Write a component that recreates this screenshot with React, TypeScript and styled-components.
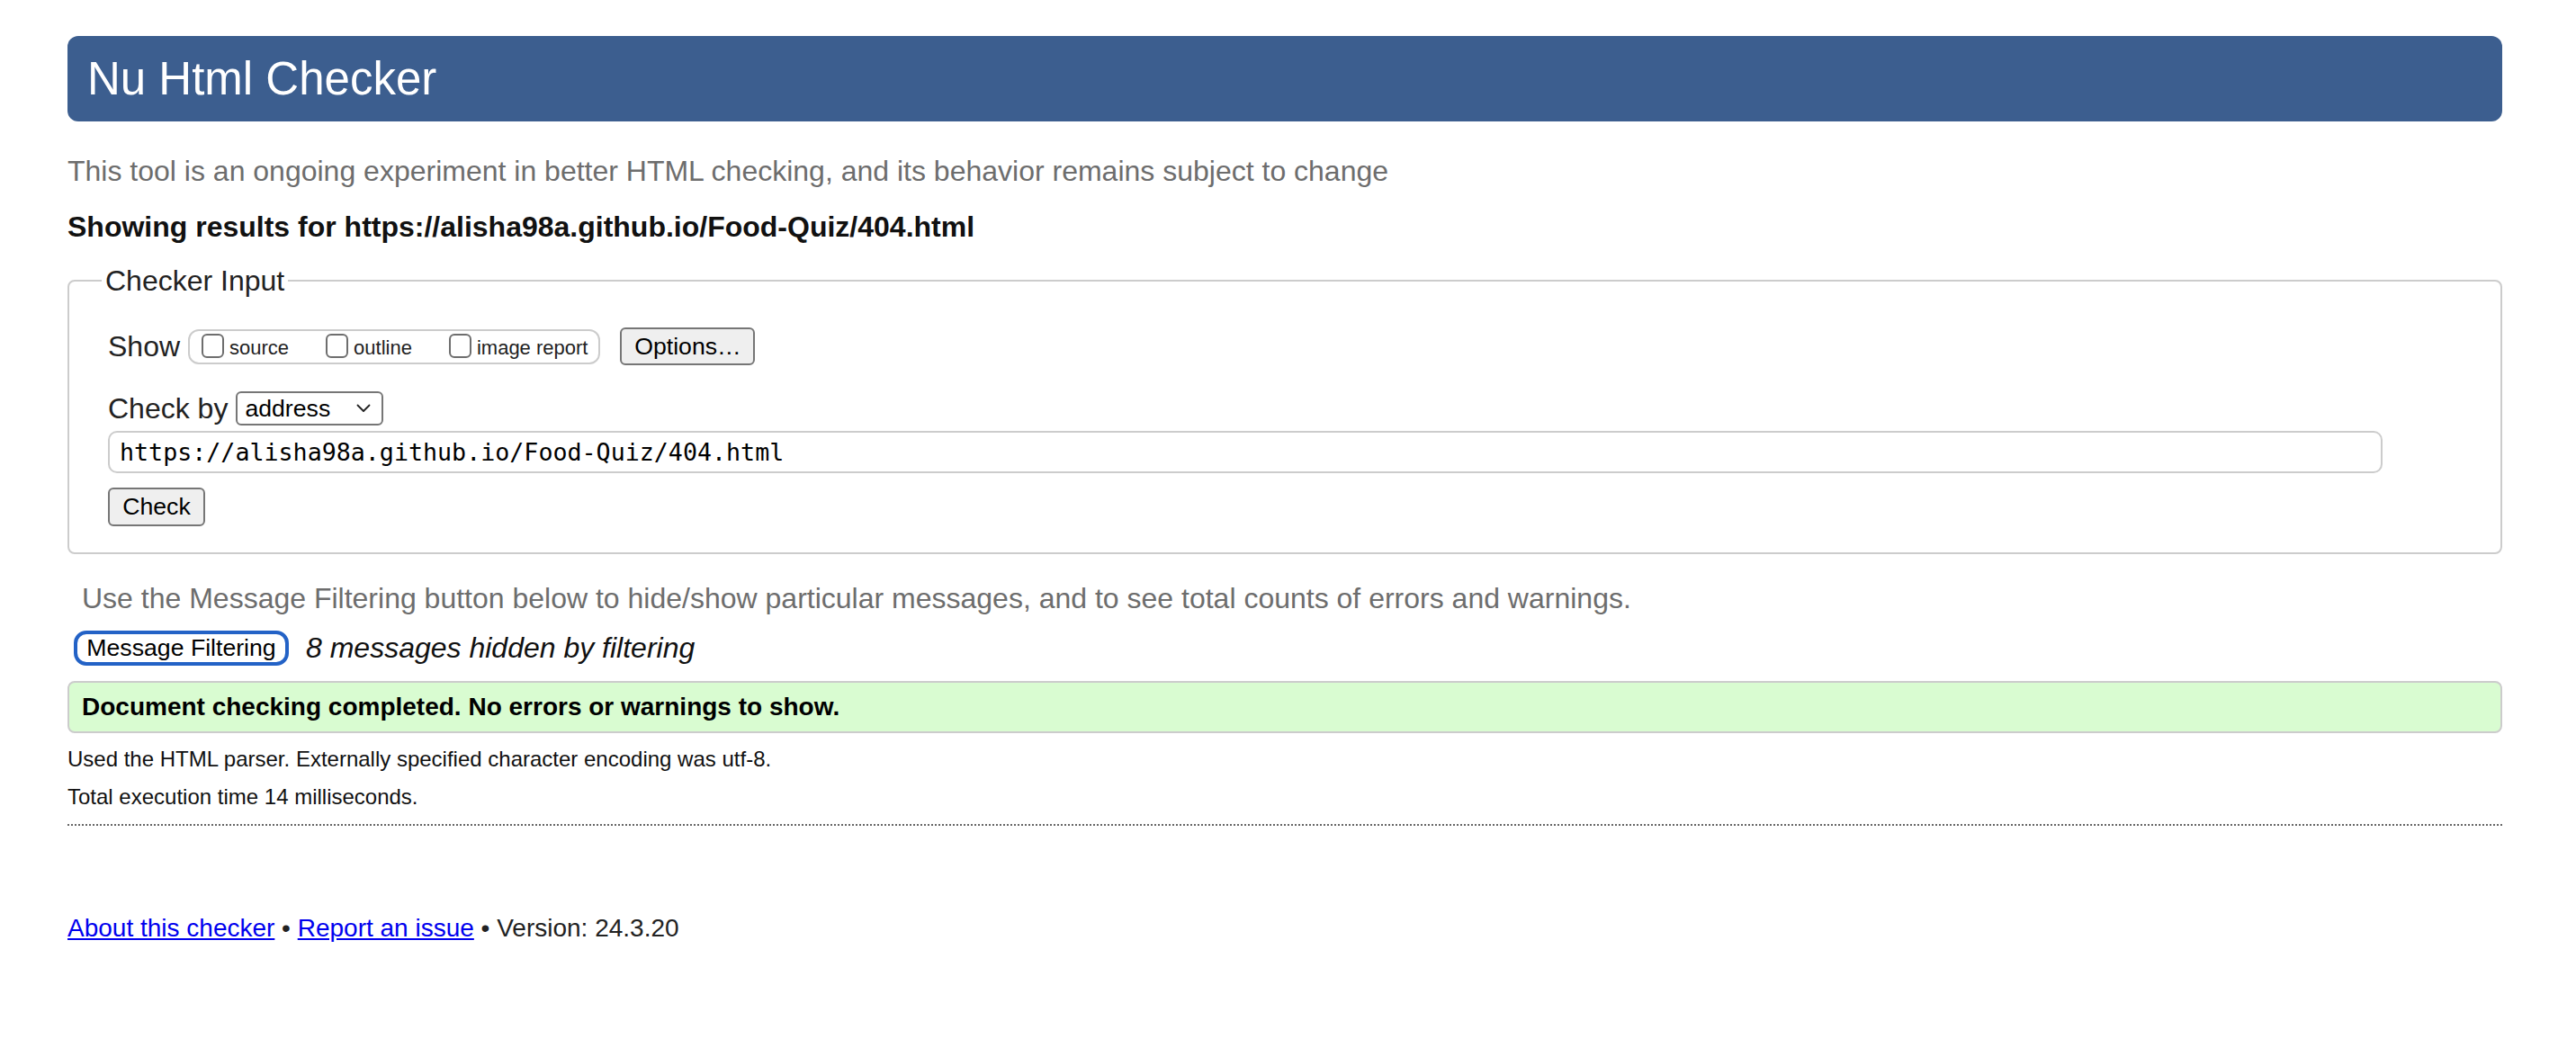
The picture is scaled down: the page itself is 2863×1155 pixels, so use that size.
import React from "react";
import styled, { createGlobalStyle } from "styled-components";

const GlobalStyle = createGlobalStyle`
  html, body {
    margin: 0;
    padding: 0;
    background: #fff;
  }
  body {
    font-family: "Liberation Sans", Arial, Helvetica, sans-serif;
    color: #222;
  }
`;

const App = () => {
  return (
    <>
      <GlobalStyle />
      <Page>
        <Header>Nu Html Checker</Header>
        <Intro>
          This tool is an ongoing experiment in better HTML checking, and its
          behavior remains subject to change
        </Intro>
        <Results>
          Showing results for https://alisha98a.github.io/Food-Quiz/404.html
        </Results>

        <Fieldset>
          <Legend>Checker Input</Legend>
          <Row>
            <RowLabel>Show</RowLabel>
            <CheckGroup>
              <Option>
                <Box type="checkbox" />
                source
              </Option>
              <Option>
                <Box type="checkbox" />
                outline
              </Option>
              <Option>
                <Box type="checkbox" />
                image report
              </Option>
            </CheckGroup>
            <Button $width={150} $height={42}>
              Options…
            </Button>
          </Row>
          <CheckByRow>
            <RowLabel>Check by</RowLabel>
            <SelectWrap>
              <Select defaultValue="address">
                <option value="address">address</option>
                <option value="file">file upload</option>
                <option value="text">text input</option>
              </Select>
              <Chevron viewBox="0 0 16 10" width="16" height="10">
                <path
                  d="M1.5 1.5 L8 8 L14.5 1.5"
                  fill="none"
                  stroke="#222"
                  strokeWidth="1.8"
                  strokeLinecap="round"
                  strokeLinejoin="round"
                />
              </Chevron>
            </SelectWrap>
          </CheckByRow>
          <UrlInput
            type="url"
            defaultValue="https://alisha98a.github.io/Food-Quiz/404.html"
          />
          <Button $width={108} $height={43} $top={16}>
            Check
          </Button>
        </Fieldset>

        <FilterHint>
          Use the Message Filtering button below to hide/show particular
          messages, and to see total counts of errors and warnings.
        </FilterHint>
        <FilterRow>
          <FilterButton>Message Filtering</FilterButton>
          <Hidden>8 messages hidden by filtering</Hidden>
        </FilterRow>

        <Success>Document checking completed. No errors or warnings to show.</Success>

        <Meta $top={14}>
          Used the HTML parser. Externally specified character encoding was
          utf-8.
        </Meta>
        <Meta $top={12}>Total execution time 14 milliseconds.</Meta>
        <Divider />

        <Footer>
          <Link href="#about">About this checker</Link> •{" "}
          <Link href="#issue">Report an issue</Link> • Version: 24.3.20
        </Footer>
      </Page>
    </>
  );
};

export default App;

const Page = styled.div`
  display: flex;
  flex-direction: column;
  padding: 40px 82px 80px 75px;
`;

const Header = styled.h1`
  margin: 0;
  height: 95px;
  padding-left: 22px;
  background: #3c5e8f;
  color: #fff;
  border-radius: 12px;
  font-size: 51px;
  font-weight: normal;
  line-height: 95px;
`;

const Intro = styled.p`
  margin: 35px 0 0;
  font-size: 32px;
  line-height: 40px;
  color: #6d6d6d;
`;

const Results = styled.p`
  margin: 22px 0 0;
  font-size: 32px;
  font-weight: bold;
  line-height: 40px;
  color: #111;
`;

const Fieldset = styled.fieldset`
  margin: 20px 0 0;
  padding: 32px 40px 29px 43px;
  border: 2px solid #ccc;
  border-radius: 8px;
  min-width: 0;
  display: flex;
  flex-direction: column;
  align-items: flex-start;
`;

const Legend = styled.legend`
  padding: 0 4px;
  margin-left: -7px;
  font-size: 32px;
  line-height: 40px;
  color: #222;
`;

const Row = styled.div`
  display: flex;
  align-items: center;
  height: 42px;
`;

const CheckByRow = styled(Row)`
  height: 38px;
  margin-top: 29px;
  gap: 7px;
`;

const RowLabel = styled.span`
  font-size: 32px;
  color: #222;
  margin-right: 2px;
`;

const CheckGroup = styled.div`
  display: flex;
  align-items: center;
  gap: 41px;
  height: 39px;
  box-sizing: border-box;
  margin-left: 7px;
  padding: 0 12px 0 13px;
  border: 2px solid #ccc;
  border-radius: 12px;
`;

const Option = styled.label`
  display: flex;
  align-items: flex-end;
  gap: 6px;
  font-size: 22px;
  color: #222;
`;

const Box = styled.input`
  appearance: none;
  margin: 0 0 2px;
  width: 25px;
  height: 27px;
  border: 2px solid #6e6e6e;
  border-radius: 6px;
  background: #fff;
  box-sizing: border-box;
`;

const Button = styled.button<{ $width: number; $height: number; $top?: number }>`
  width: ${(p) => p.$width}px;
  height: ${(p) => p.$height}px;
  margin: ${(p) => p.$top ?? 0}px 0 0 ${(p) => (p.$top ? 0 : 22)}px;
  padding: 0;
  background: #efefef;
  border: 2px solid #767676;
  border-radius: 6px;
  font-family: "Liberation Sans", Arial, sans-serif;
  font-size: 26.67px;
  color: #000;
`;

const SelectWrap = styled.span`
  position: relative;
  display: inline-flex;
`;

const Select = styled.select`
  appearance: none;
  width: 164px;
  height: 38px;
  padding: 0 0 0 8px;
  background: #fff;
  border: 2px solid #767676;
  border-radius: 6px;
  font-family: "Liberation Sans", Arial, sans-serif;
  font-size: 26.67px;
  color: #000;
`;

const Chevron = styled.svg`
  position: absolute;
  right: 14px;
  top: 14px;
  pointer-events: none;
`;

const UrlInput = styled.input`
  margin-top: 6px;
  width: 2528px;
  height: 47px;
  box-sizing: border-box;
  padding: 0 11px;
  border: 2px solid #ccc;
  border-radius: 10px;
  font-family: "DejaVu Sans Mono", "Liberation Mono", monospace;
  font-size: 26.67px;
  color: #000;
  outline: none;
`;

const FilterHint = styled.p`
  margin: 29px 0 0;
  padding-left: 16px;
  font-size: 32px;
  line-height: 40px;
  color: #6d6d6d;
`;

const FilterRow = styled.div`
  display: flex;
  align-items: center;
  gap: 19px;
  margin-top: 16px;
  padding-left: 7px;
`;

const FilterButton = styled.button`
  width: 239px;
  height: 39px;
  padding: 0;
  background: #fff;
  border: 4px solid #2362c6;
  border-radius: 14px;
  font-family: "Liberation Sans", Arial, sans-serif;
  font-size: 26.67px;
  color: #000;
`;

const Hidden = styled.em`
  font-size: 32px;
  color: #111;
`;

const Success = styled.div`
  margin-top: 17px;
  height: 58px;
  box-sizing: border-box;
  display: flex;
  align-items: center;
  padding-left: 14px;
  background: #d9fcd1;
  border: 2px solid #ccc;
  border-radius: 8px;
  font-size: 28px;
  font-weight: bold;
  color: #000;
`;

const Meta = styled.p<{ $top: number }>`
  margin: ${(p) => p.$top}px 0 0;
  font-size: 24px;
  line-height: 30px;
  color: #111;
`;

const Divider = styled.hr`
  margin: 15px 0 0;
  border: 0;
  border-top: 2px dotted #666;
  height: 0;
`;

const Footer = styled.p`
  margin: 97px 0 0;
  font-size: 28px;
  line-height: 34px;
  color: #222;
`;

const Link = styled.a`
  color: #0000ee;
  text-decoration: underline;
`;
